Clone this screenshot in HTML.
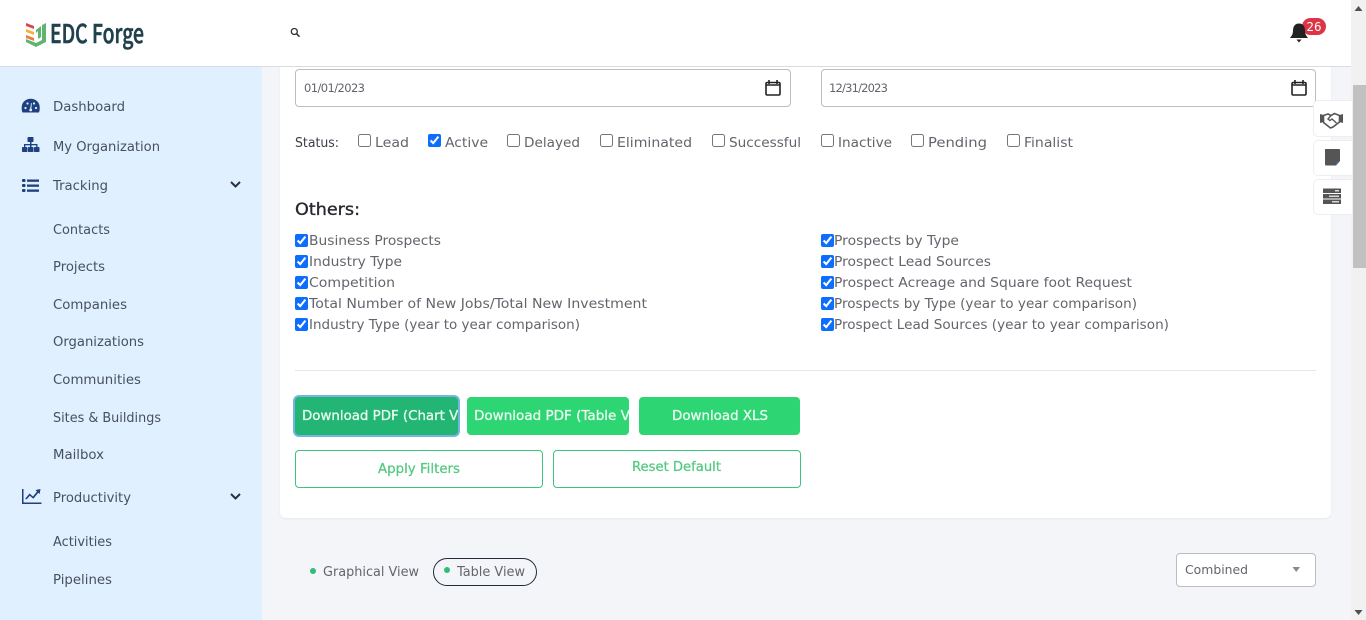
<!DOCTYPE html>
<html lang="en"><head><meta charset="utf-8"><title>EDC Forge</title>
<style>
html,body{margin:0;padding:0;width:1366px;height:620px;overflow:hidden;background:#f3f5f9}
.a{position:absolute;box-sizing:border-box}
input{position:absolute;margin:0;width:13px;height:13px;accent-color:#0d6efd}
svg.t{position:absolute;left:0;top:0;width:1366px;height:620px;z-index:5}
svg.t text{font-family:"DejaVu Sans","Liberation Sans",sans-serif;font-size:13px;fill:#62656c}
svg.t .s text{fill:#47505f}
.in{background:#fff;border:1px solid #bdbdbd;border-radius:4px}
.w{background:#fff;border:1px solid #eceef2;border-radius:5px 0 0 5px;border-right:0;width:39px;left:1313px;z-index:3}
.g{background:#2ed573;border-radius:4px;top:397px;height:38px}
.o{background:#fff;border:1px solid #3cc47c;border-radius:4px;top:450px;height:38px;width:248px}
</style></head><body>
<div class="a" style="left:0;top:0;width:1366px;height:67px;background:#fff;border-bottom:1px solid #d9dde3"></div>
<div class="a" style="left:0;top:67px;width:262px;height:553px;background:#e1f0fe"></div>
<div class="a" style="left:280px;top:67px;width:1051px;height:451px;background:#fff;border-radius:0 0 6px 6px;box-shadow:0 1px 2px rgba(0,0,0,.05)"></div>
<div class="a" style="left:1351px;top:0;width:15px;height:620px;background:#f1f1f1;z-index:2"></div>
<div class="a" style="left:1353px;top:85px;width:13px;height:183px;background:#c1c1c1;z-index:2"></div>
<div class="a in" style="left:295px;top:69px;width:496px;height:38px"></div>
<div class="a in" style="left:821px;top:69px;width:495px;height:38px"></div>
<div class="a w" style="top:100px;height:37px"></div>
<div class="a w" style="top:140px;height:36px"></div>
<div class="a w" style="top:179px;height:36px"></div>
<div class="a" style="left:295px;top:370px;width:1021px;height:1px;background:#e6e6e6"></div>
<div class="a g" style="left:295px;width:163px;background:#22b573;box-shadow:0 0 0 2px #74b5e4"></div>
<div class="a g" style="left:467px;width:162px"></div>
<div class="a g" style="left:639px;width:161px"></div>
<div class="a o" style="left:295px"></div>
<div class="a o" style="left:553px"></div>
<div class="a" style="left:433px;top:558px;width:104px;height:28px;border:1px solid #222b3a;border-radius:14px"></div>
<div class="a in" style="left:1176px;top:553px;width:140px;height:34px"></div>
<div class="a" style="left:1302px;top:18px;width:24px;height:17px;background:#dc3545;border-radius:9px;z-index:4"></div>

<input type="checkbox" style="left:358px;top:134px"><input type="checkbox" checked style="left:428px;top:134px"><input type="checkbox" style="left:507px;top:134px"><input type="checkbox" style="left:600px;top:134px"><input type="checkbox" style="left:712px;top:134px"><input type="checkbox" style="left:821px;top:134px"><input type="checkbox" style="left:911px;top:134px"><input type="checkbox" style="left:1007px;top:134px">
<input type="checkbox" checked style="left:295px;top:234px"><input type="checkbox" checked style="left:295px;top:255px"><input type="checkbox" checked style="left:295px;top:276px"><input type="checkbox" checked style="left:295px;top:297px"><input type="checkbox" checked style="left:295px;top:318px">
<input type="checkbox" checked style="left:821px;top:234px"><input type="checkbox" checked style="left:821px;top:255px"><input type="checkbox" checked style="left:821px;top:276px"><input type="checkbox" checked style="left:821px;top:297px"><input type="checkbox" checked style="left:821px;top:318px">

<svg class="t" viewBox="0 0 1366 620" xmlns="http://www.w3.org/2000/svg">
<!-- logo -->
<path d="M26 23l8 3v3l-8-3z" fill="#d8474f"/><path d="M26 29l8 3v3l-8-3z" fill="#f2b33d"/><path d="M26 35l8 3v3l-8-3z" fill="#ea7d3c"/>
<path d="M26 39v3l10 5 10-5V23l-4 2v15l-6 3-10-4z" fill="#5fb56f"/><path d="M36 30l5-4v11l-3 2v-8l-2 2z" fill="#5fb56f"/>
<text x="50" y="43" textLength="94" lengthAdjust="spacingAndGlyphs" style="font-family:'Noto Sans CJK JP','Liberation Sans',sans-serif;font-size:26px;font-weight:500;fill:#20404d;stroke:#20404d;stroke-width:.6">EDC Forge</text>
<!-- search -->
<circle cx="294.300" cy="31.500" r="3" fill="none" stroke="#333" stroke-width="1.300"/><path d="M296.500 33.700l3 3" stroke="#333" stroke-width="1.500"/>
<!-- bell -->
<path d="M1299 23.500c-4 0-6 3-6 7 0 4-1.500 5.500-3 7.500h18c-1.500-2-3-3.500-3-7.500 0-4-2-7-6-7zM1296.500 39.500h5l-2.500 3z" fill="#222"/>
<text x="1314" y="31" text-anchor="middle" textLength="15" lengthAdjust="spacingAndGlyphs" style="font-size:12px;fill:#fff">26</text>
<!-- sidebar icons -->
<g fill="#1e4080">
<path d="M22.500 112.500c-1-2-.8-3.500-.8-5.500a9 8.300 0 0 1 18 0c0 2 .2 3.500-.8 5.500z"/>
<rect x="27.500" y="137" width="6" height="5" rx=".8"/>
<rect x="22" y="147" width="5.500" height="5" rx=".8"/><rect x="28" y="147" width="5.500" height="5" rx=".8"/><rect x="34" y="147" width="5.500" height="5" rx=".8"/>
<rect x="30" y="142" width="1.500" height="5"/><rect x="24" y="144" width="13.500" height="1.300"/><rect x="24" y="144" width="1.300" height="3"/><rect x="36.200" y="144" width="1.300" height="3"/>
<rect x="22" y="179" width="3.500" height="3" rx="1"/><rect x="22" y="184" width="3.500" height="3" rx="1"/><rect x="22" y="189" width="3.500" height="3" rx="1"/>
<rect x="27" y="179.500" width="12" height="2.300"/><rect x="27" y="184.500" width="12" height="2.300"/><rect x="27" y="189.500" width="12" height="2.300"/>
<path d="M22 489h1.500v13.500h18v1.500H22z"/><path d="M25 499l4.500-5.500 3.500 3 4-5-1.500-1.500 5-1-.8 5-1.400-1.300-5 6-3.500-3-3 3.600z"/>
</g>
<g fill="#e1f0fe"><circle cx="25.500" cy="108" r="1.100"/><circle cx="27.500" cy="103.500" r="1.100"/><circle cx="36" cy="108" r="1.100"/><circle cx="34" cy="103.500" r="1.100"/><path d="M30 110l1-7 .8.200-.5 6.800z"/><circle cx="30.700" cy="110" r="1.400"/></g>
<g fill="none" stroke="#2a2f38" stroke-width="2"><path d="M231 182l4.500 4.500 4.500-4.500M231 494l4.500 4.500 4.500-4.500"/></g>
<g class="s">
<text x="53" y="111" textLength="72" lengthAdjust="spacingAndGlyphs">Dashboard</text>
<text x="53" y="151" textLength="107" lengthAdjust="spacingAndGlyphs">My Organization</text>
<text x="53" y="190" textLength="55" lengthAdjust="spacingAndGlyphs">Tracking</text>
<text x="53" y="234" textLength="57" lengthAdjust="spacingAndGlyphs">Contacts</text>
<text x="53" y="271" textLength="52" lengthAdjust="spacingAndGlyphs">Projects</text>
<text x="53" y="309" textLength="74" lengthAdjust="spacingAndGlyphs">Companies</text>
<text x="53" y="346" textLength="91" lengthAdjust="spacingAndGlyphs">Organizations</text>
<text x="53" y="384" textLength="88" lengthAdjust="spacingAndGlyphs">Communities</text>
<text x="53" y="422" textLength="108" lengthAdjust="spacingAndGlyphs">Sites &amp; Buildings</text>
<text x="53" y="459" textLength="51" lengthAdjust="spacingAndGlyphs">Mailbox</text>
<text x="53" y="502" textLength="78" lengthAdjust="spacingAndGlyphs">Productivity</text>
<text x="53" y="546" textLength="59" lengthAdjust="spacingAndGlyphs">Activities</text>
<text x="53" y="584" textLength="59" lengthAdjust="spacingAndGlyphs">Pipelines</text>
</g>
<!-- dates -->
<text x="304" y="92" textLength="61" style="font-size:11.500px">01/01/2023</text>
<text x="829" y="92" textLength="59" style="font-size:11.500px">12/31/2023</text>
<g fill="none" stroke="#222" stroke-width="1.600"><rect x="766" y="82.500" width="14" height="12.500" rx="1.200"/><path d="M766 85h14M769 80v4M777 80v4"/><rect x="1292" y="82.500" width="14" height="12.500" rx="1.200"/><path d="M1292 85h14M1295 80v4M1303 80v4"/></g>
<!-- status -->
<text x="295" y="147" textLength="44" lengthAdjust="spacingAndGlyphs" style="fill:#3a3f48">Status:</text>
<text x="375" y="147" textLength="34" lengthAdjust="spacingAndGlyphs">Lead</text>
<text x="445" y="147" textLength="43" lengthAdjust="spacingAndGlyphs">Active</text>
<text x="524" y="147" textLength="56" lengthAdjust="spacingAndGlyphs">Delayed</text>
<text x="617" y="147" textLength="75" lengthAdjust="spacingAndGlyphs">Eliminated</text>
<text x="729" y="147" textLength="72" lengthAdjust="spacingAndGlyphs">Successful</text>
<text x="838" y="147" textLength="54" lengthAdjust="spacingAndGlyphs">Inactive</text>
<text x="928" y="147" textLength="59" lengthAdjust="spacingAndGlyphs">Pending</text>
<text x="1024" y="147" textLength="49" lengthAdjust="spacingAndGlyphs">Finalist</text>
<!-- others -->
<text x="295" y="215" textLength="65" lengthAdjust="spacingAndGlyphs" style="font-size:17px;fill:#26292e;stroke:#26292e;stroke-width:.35">Others:</text>
<text x="309" y="245" textLength="132" lengthAdjust="spacingAndGlyphs">Business Prospects</text>
<text x="309" y="266" textLength="93" lengthAdjust="spacingAndGlyphs">Industry Type</text>
<text x="309" y="287" textLength="86" lengthAdjust="spacingAndGlyphs">Competition</text>
<text x="309" y="308" textLength="338" lengthAdjust="spacingAndGlyphs">Total Number of New Jobs/Total New Investment</text>
<text x="309" y="329" textLength="271" lengthAdjust="spacingAndGlyphs">Industry Type (year to year comparison)</text>
<text x="834" y="245" textLength="125" lengthAdjust="spacingAndGlyphs">Prospects by Type</text>
<text x="834" y="266" textLength="157" lengthAdjust="spacingAndGlyphs">Prospect Lead Sources</text>
<text x="834" y="287" textLength="298" lengthAdjust="spacingAndGlyphs">Prospect Acreage and Square foot Request</text>
<text x="834" y="308" textLength="303" lengthAdjust="spacingAndGlyphs">Prospects by Type (year to year comparison)</text>
<text x="834" y="329" textLength="335" lengthAdjust="spacingAndGlyphs">Prospect Lead Sources (year to year comparison)</text>
<!-- buttons -->
<svg x="295" y="397" width="163" height="38"><text x="7" y="23" textLength="184" lengthAdjust="spacingAndGlyphs" style="fill:#e9fbf0;stroke:#e9fbf0;stroke-width:.3">Download PDF (Chart View)</text></svg>
<svg x="467" y="397" width="162" height="38"><text x="7" y="23" textLength="184" lengthAdjust="spacingAndGlyphs" style="fill:#e9fbf0;stroke:#e9fbf0;stroke-width:.3">Download PDF (Table View)</text></svg>
<text x="672" y="420" textLength="96" lengthAdjust="spacingAndGlyphs" style="fill:#e9fbf0;stroke:#e9fbf0;stroke-width:.3">Download XLS</text>
<text x="378" y="473" textLength="82" lengthAdjust="spacingAndGlyphs" style="fill:#55c982;stroke:#55c982;stroke-width:.25">Apply Filters</text>
<text x="632" y="471" textLength="89" lengthAdjust="spacingAndGlyphs" style="fill:#55c982;stroke:#55c982;stroke-width:.25">Reset Default</text>
<!-- view toggle -->
<circle cx="313" cy="571" r="3" fill="#2dbf75"/><circle cx="447" cy="570" r="3" fill="#2dbf75"/>
<text x="323" y="576" textLength="96" lengthAdjust="spacingAndGlyphs">Graphical View</text>
<text x="457" y="576" textLength="68" lengthAdjust="spacingAndGlyphs">Table View</text>
<text x="1185" y="574" textLength="63" lengthAdjust="spacingAndGlyphs" style="font-size:12.500px">Combined</text>
<path d="M1292.500 567h7.500l-3.750 5z" fill="#8a8a8a"/>
<!-- scrollbar arrows -->
<path d="M1354.500 11l4-5 4 5z" fill="#505050"/><path d="M1354.500 610l4 5 4-5z" fill="#505050"/>
<!-- side widgets -->
<g fill="#555">
<path d="M1320 114l3.500 1v7l-3.500 1zM1343 114l-3.500 1v7l3.500 1z"/>
<path d="M1323.500 115.500l4.500-1.500 3 1.500 3.500-2 5 2v6.500l-6.500 5-2.500 1-7-5.500z" fill="none" stroke="#555" stroke-width="1.600"/>
<path d="M1331 115.500l-3 3.500 2 1.500 2-1.500 4.500 4" fill="none" stroke="#555" stroke-width="1.400"/>
<path d="M1325 149h14a1 1 0 0 1 1 1v11l-4 4.500h-10a1 1 0 0 1-1-1v-15.500z"/>
<rect x="1323" y="188.500" width="18" height="4.500"/><rect x="1323" y="194" width="18" height="4.500"/><rect x="1323" y="199.500" width="18" height="4.500"/>
</g>
<path d="M1336 162h3l-3 3z" fill="#3a66b0"/>
<g fill="#d8d8d8"><rect x="1335" y="190" width="4" height="1.500"/><rect x="1329" y="195.500" width="10" height="1.500"/><rect x="1332" y="201" width="7" height="1.500"/></g>
</svg>
</body></html>
